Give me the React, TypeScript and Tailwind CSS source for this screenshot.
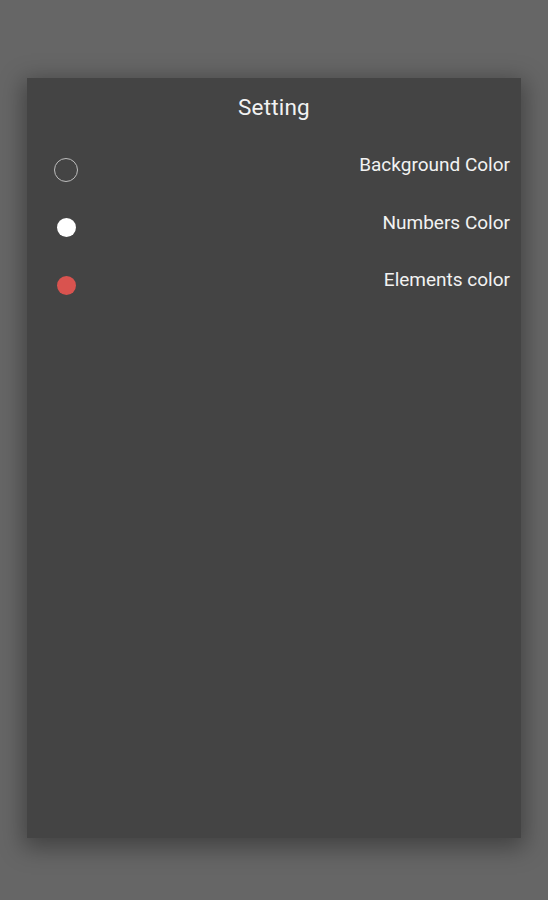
import React from 'react';

const rows = [
  { label: 'Background Color', dot: 'outline' },
  { label: 'Numbers Color', dot: 'white' },
  { label: 'Elements color', dot: 'red' },
];

const Dot: React.FC<{ kind: string }> = ({ kind }) => {
  if (kind === 'outline') {
    return <div className="w-[24px] h-[24px] rounded-full border border-[#bdbdbd]" />;
  }
  if (kind === 'white') {
    return <div className="w-[19px] h-[19px] rounded-full bg-white" />;
  }
  return <div className="w-[19px] h-[19px] rounded-full bg-[#d9534f]" />;
};

export default function App() {
  return (
    <div className="w-[548px] h-[900px] bg-[#666666] pt-[78px] pl-[27px] font-['Roboto',sans-serif]">
      <div className="w-[494px] h-[760px] bg-[#444444] shadow-[0_6px_22px_4px_rgba(0,0,0,0.35)] flex flex-col">
        <div className="h-[58px] flex items-center justify-center text-[22.5px] tracking-[0.2px] text-[#f2f2f2] pt-[1px]">
          Setting
        </div>
        <div className="flex flex-col">
          {rows.map((r) => (
            <div key={r.label} className="h-[57.5px] flex items-start justify-between pl-[27px] pr-[11px]">
              <div className="w-[24px] h-[24px] mt-[22px] flex items-center justify-center">
                <Dot kind={r.dot} />
              </div>
              <div className="text-[19px] leading-[22px] text-[#f2f2f2] mt-[18px]">{r.label}</div>
            </div>
          ))}
        </div>
      </div>
    </div>
  );
}
